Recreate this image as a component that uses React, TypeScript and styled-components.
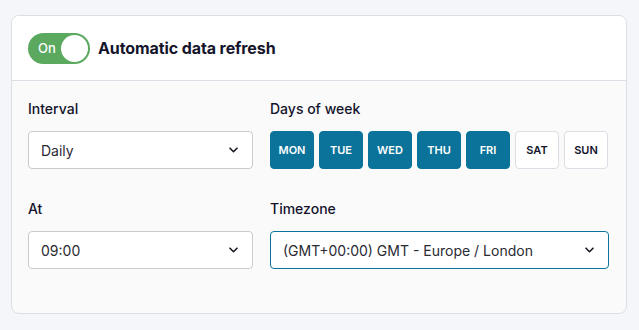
import React from "react";
import styled, { createGlobalStyle } from "styled-components";

const Global = createGlobalStyle`
  html, body { margin: 0; padding: 0; background: #f5f6fa; }
  body { font-family: Inter, "Noto Sans", sans-serif; color: #14142b; }
  * { box-sizing: border-box; }
`;

const Page = styled.div`
  padding: 15px 12px 17px 11px;
  width: 639px;
  height: 330px;
`;

const Card = styled.div`
  width: 616px;
  border: 1px solid #dcdee5;
  border-radius: 8px;
  background: #fafafb;
  overflow: hidden;
`;

const Header = styled.div`
  display: flex;
  align-items: center;
  gap: 8px;
  height: 65px;
  padding: 0 16px;
  background: #fff;
  border-bottom: 1px solid #dcdee5;
`;

const Toggle = styled.div`
  position: relative;
  width: 62px;
  height: 31px;
  border-radius: 16px;
  background: #5ba85f;
  display: flex;
  align-items: center;
  padding-left: 10px;
  color: #fff;
  font-size: 13px;
  font-weight: 500;
`;

const Knob = styled.span`
  position: absolute;
  right: 2px;
  top: 2px;
  width: 27px;
  height: 27px;
  border-radius: 50%;
  background: #fff;
`;

const Title = styled.div`
  font-size: 16px;
  font-weight: 700;
  letter-spacing: -0.1px;
  color: #14142b;
`;

const Body = styled.div`
  display: grid;
  grid-template-columns: 225px 339px;
  column-gap: 17px;
  row-gap: 31px;
  padding: 19px 16px 44px;
`;

const Field = styled.div`
  display: flex;
  flex-direction: column;
  gap: 13px;
`;

const Label = styled.div`
  font-size: 14px;
  font-weight: 500;
  line-height: 18px;
  color: #14142b;
`;

const Select = styled.div<{ $focus?: boolean }>`
  display: flex;
  align-items: center;
  justify-content: space-between;
  height: 38px;
  padding: 0 14px 0 12px;
  background: #fff;
  border: 1px solid ${(p) => (p.$focus ? "#0b7399" : "#c9cbd0")};
  border-radius: 4px;
  font-size: 14px;
  color: #2a2a33;
`;

const Days = styled.div`
  display: flex;
  gap: 5px;
`;

const Day = styled.div<{ $on?: boolean }>`
  width: 44px;
  height: 38px;
  border-radius: 4px;
  display: flex;
  align-items: center;
  justify-content: center;
  font-size: 11px;
  font-weight: 600;
  background: ${(p) => (p.$on ? "#0b7399" : "#fff")};
  color: ${(p) => (p.$on ? "#fff" : "#14142b")};
  border: 1px solid ${(p) => (p.$on ? "#0b7399" : "#dcdee5")};
`;

const Chevron = () => (
  <svg width="9" height="6" viewBox="0 0 9 6" fill="none">
    <path d="M1 1.2l3.5 3.5L8 1.2" stroke="#1a1a24" strokeWidth="1.6" strokeLinecap="round" strokeLinejoin="round" />
  </svg>
);

const days: [string, boolean][] = [
  ["MON", true],
  ["TUE", true],
  ["WED", true],
  ["THU", true],
  ["FRI", true],
  ["SAT", false],
  ["SUN", false],
];

export default function App() {
  return (
    <Page>
      <Global />
      <Card>
        <Header>
          <Toggle>
            On
            <Knob />
          </Toggle>
          <Title>Automatic data refresh</Title>
        </Header>
        <Body>
          <Field>
            <Label>Interval</Label>
            <Select>
              Daily
              <Chevron />
            </Select>
          </Field>
          <Field>
            <Label>Days of week</Label>
            <Days>
              {days.map(([d, on]) => (
                <Day key={d} $on={on}>
                  {d}
                </Day>
              ))}
            </Days>
          </Field>
          <Field>
            <Label>At</Label>
            <Select>
              09:00
              <Chevron />
            </Select>
          </Field>
          <Field>
            <Label>Timezone</Label>
            <Select $focus>
              (GMT+00:00) GMT - Europe / London
              <Chevron />
            </Select>
          </Field>
        </Body>
      </Card>
    </Page>
  );
}
